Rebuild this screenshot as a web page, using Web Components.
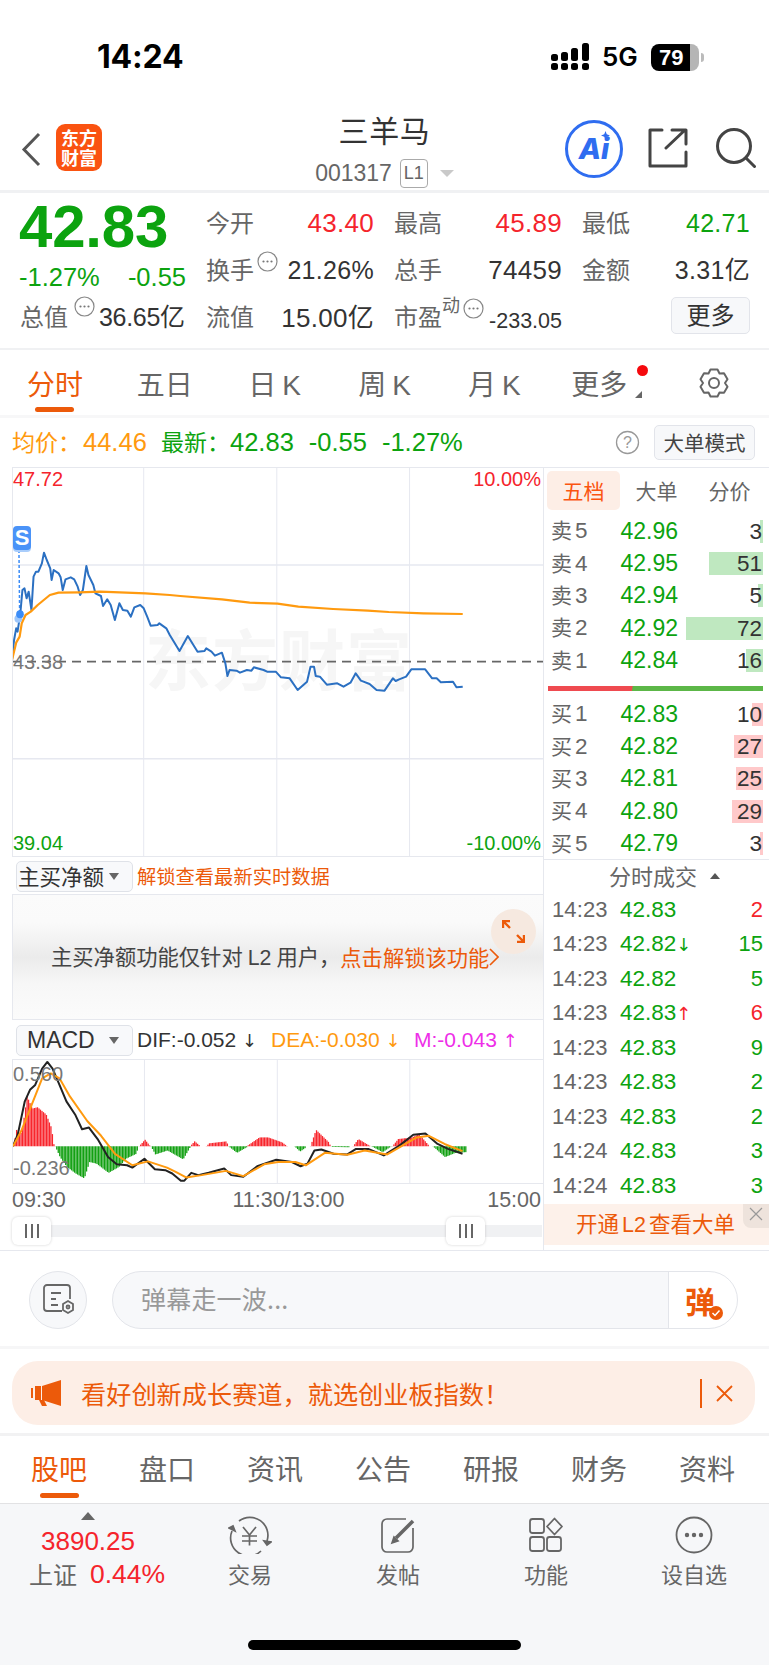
<!DOCTYPE html>
<html lang="zh-CN"><head><meta charset="utf-8"><title>三羊马</title>
<style>
html,body{margin:0;padding:0;background:#fff}
body{width:769px;height:1665px;overflow:hidden;font-family:"Liberation Sans","Noto Sans CJK SC",sans-serif;color:#333}
app-shell{display:block}
</style></head><body>
<app-shell>
<status-bar></status-bar>
<stock-header></stock-header>
<quote-panel>
<quote-cell label="今开" tone="up">43.40</quote-cell>
<quote-cell label="最高" tone="up">45.89</quote-cell>
<quote-cell label="最低" tone="down" fs="25">42.71</quote-cell>
<quote-cell label="换手" dots fs="25">21.26%</quote-cell>
<quote-cell label="总手">74459</quote-cell>
<quote-cell label="金额" fs="25" lift>3.31亿</quote-cell>
<quote-cell label="流值" lift>15.00亿</quote-cell>
<quote-cell label="市盈" sup="动" dots small>-233.05</quote-cell>
<more-button>更多</more-button>
</quote-panel>
<period-tabs>
<tab-item active>分时</tab-item><tab-item>五日</tab-item><tab-item>日<i>K</i></tab-item><tab-item>周<i>K</i></tab-item><tab-item>月<i>K</i></tab-item><tab-item more>更多</tab-item>
</period-tabs>
<info-row></info-row>
<market-area>
<div slot="left">
<intraday-chart></intraday-chart>
<main-net></main-net>
<macd-chart></macd-chart>
<range-slider></range-slider>
</div>
<div slot="right">
<order-book></order-book>
<trade-list></trade-list>
</div>
</market-area>
<danmu-bar></danmu-bar>
<promo-banner></promo-banner>
<sub-tabs>
<tab-item active>股吧</tab-item><tab-item>盘口</tab-item><tab-item>资讯</tab-item><tab-item>公告</tab-item><tab-item>研报</tab-item><tab-item>财务</tab-item><tab-item>资料</tab-item>
</sub-tabs>
<foot-bar></foot-bar>
</app-shell>
<script>
const RED='#f5242c',GREEN='#0ca30f',ORANGE='#ec5a0a',AVG='#ff9a0f';
class Base extends HTMLElement{
  connectedCallback(){ if(this.shadowRoot) return;
    this.attachShadow({mode:'open'}).innerHTML=`<style>${this.css()}</style>${this.html()}`; }
  css(){return ':host{display:block}'} html(){return '<slot></slot>'}
}
const def=(n,c)=>customElements.define(n,c);

def('app-shell',class extends Base{});

def('status-bar',class extends Base{
  css(){return `:host{display:flex;height:110px;box-sizing:border-box;padding:36px 0 0 97px;align-items:flex-start;color:#000}
  .t{font:700 32px/42px "Inter","Liberation Sans",sans-serif;letter-spacing:-.2px;width:454px}
  svg{display:block;margin-top:7px}
  .g{font:600 26px/42px "Inter","Liberation Sans",sans-serif;margin-left:13px;width:49px}
  .b{display:flex;align-items:center;margin-top:8px}
  .bat{width:48px;height:27px;border-radius:8px;background:linear-gradient(90deg,#000 0 39px,#b5b5b5 39px);color:#fff;font:700 22px/27px "Liberation Sans",sans-serif;padding-left:8px;box-sizing:border-box}
  .nub{width:3px;height:9px;background:#bbb;border-radius:0 3px 3px 0;margin-left:2px}`}
  html(){return `<div class="t">14:24</div>
  <svg width="38" height="28" viewBox="0 0 38 28" fill="#000"><rect x="0" y="11" width="7" height="7" rx="2.500"/><rect x="0" y="20" width="7" height="7" rx="2.500"/><rect x="10" y="9" width="7" height="9" rx="2.500"/><rect x="10" y="20" width="7" height="7" rx="2.500"/><rect x="20" y="5" width="7" height="13" rx="2.500"/><rect x="20" y="20" width="7" height="7" rx="2.500"/><rect x="31" y="0" width="7" height="18" rx="2.500"/><rect x="31" y="20" width="7" height="7" rx="2.500"/></svg>
  <div class="g">5G</div><div class="b"><div class="bat">79</div><div class="nub"></div></div>`}
});

def('stock-header',class extends Base{
  css(){return `:host{display:grid;grid-template-columns:1fr auto 1fr;height:83px;box-sizing:border-box;border-bottom:3px solid #f0f1f3}
  .l{display:flex;align-items:flex-start;padding:14px 0 0 21px}
  .chev{margin-top:8px}
  .logo{width:46px;height:47px;border-radius:9px;background:#fa5311;color:#fff;font:700 18px/20px "Noto Sans CJK SC",sans-serif;text-align:center;margin-left:15px;padding:3px 5px 0;box-sizing:border-box;word-break:break-all}
  .c{display:flex;flex-direction:column;align-items:center;margin-top:-1px}
  .n{font:400 30px/40px "Noto Sans CJK SC",sans-serif;color:#333;letter-spacing:.6px}
  .cd{display:flex;align-items:center;margin-top:9px;font-size:23px;color:#666;line-height:30px}
  .lv{border:1.2px solid #aaa;border-radius:4px;width:26px;height:27px;font-size:18px;line-height:27px;text-align:center;margin-left:8px;color:#666;box-sizing:content-box}
  .tri{width:0;height:0;border:7px solid transparent;border-top:7px solid #c9c9c9;border-bottom:0;margin-left:12px}
  .r{display:flex;justify-content:flex-end;align-items:flex-start;padding:10px 13px 0 0}
  .ai{width:52px;height:52px;border:3px solid #2f6df0;border-radius:50%;color:#2f6df0;font:italic 800 29px/52px "Inter","Liberation Sans",sans-serif;text-align:center;margin-right:25px;position:relative}
  .ai svg{position:absolute;right:10px;top:8px}
  .sh{margin:8px 28px 0 0}.se{margin-top:8px}`}
  html(){return `<div class="l"><svg class="chev" width="20" height="35" viewBox="0 0 20 35"><polyline points="18,2 3,17.5 18,33" fill="none" stroke="#555" stroke-width="3"/></svg><div class="logo">东方财富</div></div>
  <div class="c"><div class="n">三羊马</div><div class="cd">001317<span class="lv">L1</span><span class="tri"></span></div></div>
  <div class="r"><div class="ai">Ai<svg width="9" height="9" viewBox="0 0 10 10"><path d="M5 0l1.400 3.600L10 5 6.400 6.400 5 10 3.600 6.400 0 5l3.600-1.400z" fill="#2f6df0"/></svg></div>
  <svg class="sh" width="40" height="40" viewBox="0 0 40 40" fill="none" stroke="#444" stroke-width="3" stroke-linecap="round" stroke-linejoin="round"><path d="M14 2H2v36h36V24"/><path d="M18 20L37 2M24 2h14v14"/></svg>
  <svg class="se" width="40" height="40" viewBox="0 0 40 40" fill="none" stroke="#444" stroke-width="3" stroke-linecap="round"><circle cx="18" cy="18" r="16.500"/><path d="M30 30l8.500 8.500"/></svg></div>`}
});

const DOTS=`<svg width="21" height="21" viewBox="0 0 21 21" style="flex:none"><circle cx="10.500" cy="10.500" r="9.500" fill="none" stroke="#888" stroke-width="1.200"/><circle cx="6.500" cy="10.500" r="1.100" fill="#777"/><circle cx="10.500" cy="10.500" r="1.100" fill="#777"/><circle cx="14.500" cy="10.500" r="1.100" fill="#777"/></svg>`;

def('quote-panel',class extends Base{
  css(){return `:host{display:grid;grid-template-columns:166px 1fr;column-gap:20px;height:157px;box-sizing:border-box;padding:0 19px 0 20px;border-bottom:2px solid #f0f1f3}
  .p{font:700 60px/62px "Liberation Sans",sans-serif;color:${GREEN};margin:3px 0 0 -1px;letter-spacing:-.2px;white-space:nowrap}
  .ch{display:flex;justify-content:space-between;width:167px;margin-left:-1px;font-size:25.500px;line-height:32px;color:${GREEN};margin-top:3px;white-space:nowrap}
  .tv{display:flex;align-items:flex-start;width:168px;margin-top:6px;white-space:nowrap;color:#333;height:40px}
  .tv b{font-weight:400;color:#666;font-size:24px;line-height:36px;margin-top:-1px;font-family:"Noto Sans CJK SC",sans-serif}
  .tv svg{margin:-3px 4px 0 6px}
  .tv span{font-size:25px;line-height:36px;letter-spacing:-.3px}
  .g{display:grid;grid-template-columns:168px 168px 168px;column-gap:20px;grid-auto-rows:47px;padding-top:7px;align-items:center;align-self:start}`}
  html(){return `<div><div class="p">42.83</div><div class="ch"><span>-1.27%</span><span>-0.55</span></div>
  <div class="tv"><b>总值</b>${DOTS}<span>36.65亿</span></div></div><div class="g"><slot></slot></div>`}
});
def('quote-cell',class extends Base{
  css(){const t=this.getAttribute('tone'),sm=this.hasAttribute('small'),fs=this.getAttribute('fs')||26;return `:host{display:flex;justify-content:space-between;align-items:center;height:47px;white-space:nowrap}
  .l{display:flex;align-items:center;color:#666;font:400 24px/34px "Noto Sans CJK SC",sans-serif;margin-top:-4px}
  .l svg{margin:-14px 0 0 3px}
  sup{font-size:18px;line-height:18px;align-self:flex-start;margin-top:-4px}
  .v{font-size:${sm?'21.500px':fs+'px'};letter-spacing:${sm?'0':'.3px'};color:${t=='up'?RED:t=='down'?GREEN:'#333'};${sm?'margin-top:7px;':''}${this.hasAttribute('lift')?'margin-top:-5px;':''}}`}
  html(){return `<div class="l">${this.getAttribute('label')}${this.hasAttribute('sup')?`<sup>${this.getAttribute('sup')}</sup>`:''}${this.hasAttribute('dots')?DOTS:''}</div><div class="v"><slot></slot></div>`}
});
def('more-button',class extends Base{
  css(){return `:host{display:block;justify-self:end;width:79px;height:37px;box-sizing:border-box;border:1.500px solid #e2e4ea;border-radius:5px;background:#f7f8fa;font:400 24px/32px "Noto Sans CJK SC",sans-serif;color:#333;text-align:center;margin-top:-5px}`}
});

def('tab-item',class extends Base{
  css(){const a=this.hasAttribute('active'),m=this.hasAttribute('more');return `:host{display:flex;flex-direction:column;align-items:center;padding-top:15px;${m?'margin-right:10px;':''}color:${a?ORANGE:'#666'};font:400 28px/37px "Noto Sans CJK SC",sans-serif}
  .t{display:block;position:relative;white-space:nowrap}
  .bar{width:39px;height:5px;border-radius:3px;background:${a?ORANGE:'transparent'};margin-top:var(--bar-gap,5px)}
  ::slotted(i){font:400 28px/37px "Liberation Sans",sans-serif;margin-left:6px}
  .dot{position:absolute;right:-21px;top:0;width:11px;height:11px;border-radius:50%;background:#f5090d}
  .mt{position:absolute;right:-15px;bottom:4px;width:0;height:0;border-left:7px solid transparent;border-bottom:7px solid #666}`}
  html(){const m=this.hasAttribute('more');return `<div class="t"><slot></slot>${m?'<span class="dot"></span><span class="mt"></span>':''}</div><div class="bar"></div>`}
});
def('period-tabs',class extends Base{
  css(){return `:host{display:grid;grid-template-columns:repeat(7,1fr);height:68px;box-sizing:border-box;border-bottom:3px solid #f7f7f8}
  .g{display:flex;justify-content:center;padding-top:17px}`}
  html(){return `<slot></slot><div class="g"><svg width="32" height="32" viewBox="0 0 32 32" fill="none" stroke="#666" stroke-width="2"><path d="M12.500 2.500h7l2 4 4.500-.3 3.500 6-2.500 3.800 2.500 3.800-3.500 6-4.500-.3-2 4h-7l-2-4-4.500.3-3.500-6 2.500-3.800-2.500-3.800 3.500-6 4.500.3z" stroke-linejoin="round"/><circle cx="16" cy="16" r="5"/></svg></div>`}
});

def('info-row',class extends Base{
  css(){return `:host{display:flex;align-items:center;height:49px;box-sizing:border-box;padding:0 14px 0 12px;font-size:25.500px;white-space:nowrap}
  b{font:400 23px/30px "Noto Sans CJK SC",sans-serif;margin-bottom:4px}
  .a{color:${AVG};display:flex;align-items:center;width:149px}
  .a b{margin-right:2px}
  .n{color:${GREEN};display:flex;align-items:center}
  .n span{margin-right:15px}
  .h{margin-left:auto;margin-right:14px;display:block}
  .btn{width:101px;height:35px;border:1.500px solid #e2e4ea;border-radius:5px;background:#f7f8fa;box-sizing:border-box;font:400 20.500px/32px "Noto Sans CJK SC",sans-serif;color:#444;text-align:center;margin-top:0}`}
  html(){return `<div class="a"><b>均价：</b>44.46</div><div class="n"><b>最新：</b><span>42.83</span><span>-0.55</span><span>-1.27%</span></div>
  <svg class="h" width="25" height="25" viewBox="0 0 25 25"><circle cx="12.500" cy="12.500" r="11" fill="none" stroke="#999" stroke-width="1.300"/><text x="12.500" y="18" text-anchor="middle" font-size="16" fill="#999" font-family="Liberation Sans">?</text></svg>
  <div class="btn">大单模式</div>`}
});

def('market-area',class extends Base{
  css(){return `:host{display:grid;grid-template-columns:531px 226px;padding-left:12px;height:784px;box-sizing:border-box;border-bottom:1.500px solid #e6e8ee}`}
  html(){return `<slot name="left"></slot><slot name="right"></slot>`}
});

const BLUE_PTS="36,600 42,540 48,505 52,515 60,460 66,390 72,385 78,415 84,395 92,450 98,350 105,335 112,335 122,310 128,278 136,300 146,325 150,360 156,330 170,340 176,352 182,390 190,358 205,352 215,358 225,380 232,405 240,390 250,318 256,345 270,375 276,400 292,408 298,438 310,418 320,435 332,480 345,430 355,450 368,452 378,470 388,442 405,435 415,445 425,470 435,497 455,495 460,490 480,505 490,525 518,573 542,528 570,575 590,573 595,565 610,575 620,587 640,578 650,610 656,648 662,630 682,632 692,638 712,630 725,632 732,622 760,630 770,635 795,635 810,652 835,655 858,690 885,665 895,620 905,620 910,648 922,650 942,674 972,670 990,680 1010,668 1025,640 1040,662 1065,672 1085,690 1108,692 1132,655 1140,663 1150,658 1170,650 1185,628 1225,628 1245,655 1258,655 1270,667 1305,665 1315,682 1333,680";
const ORG_PTS="36,600 48,548 58,530 64,490 75,465 90,455 110,435 145,405 170,398 230,397 290,395 420,400 490,405 520,408 640,418 720,428 800,431 860,440 960,447 1060,452 1120,456 1220,460 1333,462";
const VL=(y1,y2)=>[415,798,1180].map(x=>`<line x1="${x}" x2="${x}" y1="${y1}" y2="${y2}" stroke="#e6e8f0" stroke-width="1" vector-effect="non-scaling-stroke"/>`).join('');
const HL=(y)=>`<line x1="36" x2="1564" y1="${y}" y2="${y}" stroke="#e6e8f0" stroke-width="1.500" vector-effect="non-scaling-stroke"/>`;

def('intraday-chart',class extends Base{
  css(){return `:host{display:block;position:relative;width:531px;height:390px;box-sizing:border-box;font-size:20px;border:1px solid #e6e8ee;border-right:0;overflow:hidden}
  svg{display:block;position:absolute;left:-1px;top:-1px;width:531px;height:390px}
  span{position:absolute;line-height:24px;white-space:nowrap}
  .wm{left:132px;top:153px;font:700 66px/70px "Noto Sans CJK SC",sans-serif;color:#f6f6f6;letter-spacing:1px}
  .u{color:${RED}}.d{color:${GREEN}}
  .s{left:0;top:58px;width:18px;height:24px;background:#4a93f8;border-radius:4px;color:#fff;font:700 22px/24px "Liberation Sans",sans-serif;text-align:center;box-shadow:0 2px 0 #a9cdfb}`}
  html(){return `<span class="wm">东方财富</span>
  <svg viewBox="36 21 1528 1170" preserveAspectRatio="none">${VL(21,1191)}${HL(315)}${HL(896)}
  <line x1="36" x2="1564" y1="605" y2="605" stroke="#666" stroke-width="1.800" stroke-dasharray="9 6" vector-effect="non-scaling-stroke"/>
  <line x1="56" x2="58" y1="270" y2="465" stroke="#3b8cf7" stroke-width="1.500" stroke-dasharray="3 2" vector-effect="non-scaling-stroke"/>
  <polyline points="${BLUE_PTS}" fill="none" stroke="#2b70c2" stroke-width="2" stroke-linejoin="round" vector-effect="non-scaling-stroke"/>
  <polyline points="${ORG_PTS}" fill="none" stroke="#ff9a0f" stroke-width="2.200" stroke-linejoin="round" vector-effect="non-scaling-stroke"/>
  <ellipse cx="54" cy="476" rx="11" ry="12" fill="#9cc6fb"/><ellipse cx="59" cy="463" rx="11" ry="12" fill="#3b8cf7"/>
  </svg>
  <span class="u" style="left:0;top:-1px">47.72</span><span class="u" style="right:2px;top:-1px">10.00%</span>
  <span class="d" style="left:0;bottom:1px">39.04</span><span class="d" style="right:2px;bottom:1px">-10.00%</span>
  <span style="left:0;top:182px;color:#777">43.38</span>
  <span class="s">S</span>`}
});

const DROP=`.dd{display:flex;align-items:center;justify-content:space-between;width:117px;height:31px;box-sizing:border-box;border:1.500px solid #dfe2e8;border-radius:5px;background:#f8f9fb;padding:0 13px 0 1px;color:#333;white-space:nowrap}
  .dd i{width:0;height:0;border:5px solid transparent;border-top:7px solid #666;border-bottom:0;display:block}`;
def('main-net',class extends Base{
  css(){return `:host{display:block;width:531px}
  ${DROP}
  .top{display:flex;align-items:center;height:38px;padding:1px 0 0 4px;box-sizing:border-box;gap:4px;border-bottom:1.500px solid #e6e8ee}
  .dd{font:400 21.500px/28px "Noto Sans CJK SC",sans-serif}
  .lk{color:${ORANGE};font:400 19.300px/30px "Noto Sans CJK SC",sans-serif;white-space:nowrap}
  .p{position:relative;height:125px;border-bottom:1.500px solid #e6e8ee;box-sizing:border-box;border-left:1px solid #e6e8ee;background:linear-gradient(180deg,#fbfbfb 0,#fafafa 22%,#ebebeb 50%,#f7f7f7 72%,#fbfbfb 100%);display:flex;align-items:center;padding:0 0 0 38px;font:400 21.300px/30px "Noto Sans CJK SC",sans-serif;color:#444;white-space:nowrap}
  .p em{font-style:normal;color:${ORANGE}}
  .p u{text-decoration:none;font-family:"Liberation Sans",sans-serif;margin:0 5px}
  .c{position:absolute;right:7px;top:14px;width:45px;height:45px;border-radius:50%;background:#f6e9e0}
  .c svg{display:block;margin:11px}`}
  html(){return `<div class="top"><div class="dd">主买净额<i></i></div><div class="lk">解锁查看最新实时数据</div></div>
  <div class="p"><span>主买净额功能仅针对<u>L2</u>用户，</span><em>点击解锁该功能</em><svg width="10" height="18" viewBox="0 0 10 18" fill="none" stroke="${ORANGE}" stroke-width="1.600"><path d="M1 1l8 8-8 8"/></svg>
  <div class="c"><svg width="23" height="23" viewBox="0 0 23 23" fill="none" stroke="${ORANGE}" stroke-width="2.400"><path d="M1 8V1h7M1 1l7 7M22 15v7h-7M22 22l-7-7"/></svg></div></div>`}
});

const ENV=[
 ['r',[[36,377],[45,325],[55,345],[62,320],[75,225],[90,262],[105,258],[130,280],[145,320],[153,377]]],
 ['g',[[156,377],[170,410],[190,440],[215,460],[240,475],[255,425],[275,430],[310,458],[340,440],[360,415],[390,400],[396,377]]],
 ['r',[[398,377],[415,357],[430,377]]],
 ['g',[[432,377],[445,402],[480,390],[525,417],[545,380]]],
 ['r',[[545,377],[558,362],[575,377]]],
 ['r',[[592,377],[600,368],[650,362],[655,377]]],
 ['g',[[656,377],[680,397],[708,380]]],
 ['r',[[708,377],[745,350],[770,350],[810,365],[825,377]]],
 ['g',[[846,377],[862,393],[880,380]]],
 ['r',[[892,377],[908,327],[945,365],[950,377]]],
 ['g',[[955,379],[1005,380]]],
 ['r',[[1015,377],[1030,355],[1065,377]]],
 ['g',[[1068,377],[1100,395],[1125,377]]],
 ['r',[[1128,377],[1145,355],[1185,350],[1205,340],[1235,377]]],
 ['g',[[1245,377],[1280,410],[1310,397],[1340,395],[1341,377]]]
];
function bars(){let s='';for(const [c,p] of ENV){for(let x=p[0][0];x<=p[p.length-1][0];x+=4.3){let i=0;while(i<p.length-2&&x>p[i+1][0])i++;const a=p[i],b=p[i+1],y=a[1]+(b[1]-a[1])*(x-a[0])/(b[0]-a[0]);const t=Math.min(y,377),h=Math.abs(y-377);s+=`<rect x="${x.toFixed(1)}" y="${t.toFixed(1)}" width="3.700" height="${Math.max(h,.5).toFixed(1)}" fill="${c=='r'?'#f8252c':'#12a012'}"/>`}}return s}
const DIF="36,377 50,340 70,240 85,205 100,190 120,140 135,120 150,140 170,190 190,240 215,280 235,325 255,320 280,355 310,410 335,432 365,435 380,442 415,415 445,447 475,450 495,460 520,482 530,482 550,458 570,465 600,458 645,445 665,465 700,470 740,438 795,418 840,425 865,438 885,430 905,390 925,387 960,400 1000,402 1025,385 1060,385 1105,405 1150,375 1190,342 1225,338 1260,370 1290,385 1332,400";
const DEA="36,377 60,330 90,250 120,170 145,155 170,170 200,225 250,300 290,345 330,400 380,435 425,423 480,442 505,455 535,472 580,465 650,452 700,468 760,432 800,425 850,425 880,435 935,397 1000,403 1050,390 1115,402 1200,350 1235,345 1280,370 1332,392";
def('macd-chart',class extends Base{
  css(){return `:host{display:block;width:531px}
  ${DROP}
  .top{display:flex;align-items:center;height:39px;padding:1px 0 0 4px;box-sizing:border-box;white-space:nowrap;font-size:21px}
  .top s{text-decoration:none;font:400 18px/24px "DejaVu Sans",sans-serif}
  .dd{font-size:23px;line-height:28px;padding-left:10px;margin-right:4px}
  .dif{color:#333;width:134px}.dea{color:${AVG};width:143px}.m{color:#ee2ee8}
  .ch{position:relative;height:125px;border-top:1.500px solid #e6e8ee;border-bottom:1.500px solid #e6e8ee;box-sizing:border-box;border-left:1px solid #e6e8ee}
  svg{display:block;width:100%;height:100%}
  .ch span{position:absolute;left:0;color:#777;font-size:20px;line-height:24px}
  .tm{display:flex;justify-content:space-between;height:31px;font-size:21.500px;line-height:32px;color:#666;padding-right:2px}
  .tm .mid{margin-left:24px}`}
  html(){return `<div class="top"><div class="dd">MACD<i></i></div><span class="dif">DIF:-0.052 <s>↓</s></span><span class="dea">DEA:-0.030 <s>↓</s></span><span class="m">M:-0.043 <s>↑</s></span></div>
  <div class="ch"><svg viewBox="36 114 1528 375" preserveAspectRatio="none">${VL(114,489)}
  ${bars()}
  <polyline points="${DIF}" fill="none" stroke="#222" stroke-width="2" stroke-linejoin="round" vector-effect="non-scaling-stroke"/>
  <polyline points="${DEA}" fill="none" stroke="#ff9a0f" stroke-width="2" stroke-linejoin="round" vector-effect="non-scaling-stroke"/></svg>
  <span style="top:2px">0.560</span><span style="top:96px">-0.236</span></div>
  <div class="tm"><span>09:30</span><span class="mid">11:30/13:00</span><span>15:00</span></div>`}
});
def('range-slider',class extends Base{
  css(){return `:host{display:flex;height:34px;padding-top:2px;box-sizing:content-box;width:530px;background:linear-gradient(#f0f1f3,#f0f1f3) 0 10px/100% 12px no-repeat;border-radius:6px}
  .h{width:39px;height:28px;background:#fff;border-radius:6px;box-shadow:0 0 3px rgba(0,0,0,.18);display:flex;justify-content:center;align-items:center;gap:4px}
  .h i{width:2px;height:14px;background:#666;display:block}
  .h+.h{margin-left:395px}`}
  html(){const h=`<div class="h"><i></i><i></i><i></i></div>`;return h+h}
});

def('book-row',class extends Base{
  css(){const c=this.getAttribute('side')=='s'?'#bfe8c0':'#ffc9ca';const w=this.getAttribute('w');return `:host{display:grid;grid-template-columns:38px 89px 1fr;align-items:center;height:32.400px;padding:0 6px 0 7px;white-space:nowrap}
  .l{color:#666;font:400 21px/24px "Noto Sans CJK SC",sans-serif;display:flex;align-items:center;gap:3px}
  .l span{margin-top:-4px}
  .l b{font:400 22.500px/24px "Liberation Sans",sans-serif}
  .p{color:${GREEN};text-align:right;font-size:23px}
  .q{color:#333;text-align:right;font-size:22.500px;line-height:23px;padding-right:1px;background:linear-gradient(${c},${c}) right/${w}px 100% no-repeat}`}
  html(){const [a,b]=this.getAttribute('label').split(' ');return `<div class="l"><span>${a}</span><b>${b}</b></div><div class="p">${this.getAttribute('price')}</div><div class="q">${this.getAttribute('qty')}</div>`}
});
def('order-book',class extends Base{
  css(){return `:host{display:block;border-bottom:1.500px solid #e6e8ee;height:393px;box-sizing:border-box;border-left:1px solid #e6e8ee;border-top:1px solid #e6e8ee}
  .t{display:grid;grid-template-columns:73px 73px 73px;padding:3px 0 0 3px;margin-bottom:5px;font:400 21px/39px "Noto Sans CJK SC",sans-serif;color:#666;text-align:center}
  .t .a{background:#fdeee6;color:#fb5510;border-radius:5px}
  .sp{height:5px;margin:9px 6px 7px 4px;background:linear-gradient(99deg,#ef4a50 0 39%,#5cb748 39.500%)}`}
  html(){const r=(l,p,q,w,s)=>`<book-row label="${l}" price="${p}" qty="${q}" w="${w}" side="${s}"></book-row>`;
  return `<div class="t"><div class="a">五档</div><div>大单</div><div>分价</div></div>
  ${r('卖 5','42.96','3',3,'s')}${r('卖 4','42.95','51',54,'s')}${r('卖 3','42.94','5',5,'s')}${r('卖 2','42.92','72',77,'s')}${r('卖 1','42.84','16',17,'s')}
  <div class="sp"></div>
  ${r('买 1','42.83','10',11,'b')}${r('买 2','42.82','27',29,'b')}${r('买 3','42.81','25',27,'b')}${r('买 4','42.80','29',31,'b')}${r('买 5','42.79','3',3,'b')}`}
});
def('trade-list',class extends Base{
  css(){return `:host{display:block;position:relative;height:390px;box-sizing:border-box;border-left:1px solid #e6e8ee;font-size:22px}
  .h{display:flex;justify-content:center;align-items:center;gap:13px;height:31px;margin-bottom:1.500px;color:#666;font:400 22px/31px "Noto Sans CJK SC",sans-serif;padding-left:16px}
  .h i{width:0;height:0;border:5px solid transparent;border-bottom:6px solid #555;border-top:0}
  .r{display:grid;grid-template-columns:68px 96px 1fr;align-items:center;height:34.500px;padding:0 6px 0 8px;white-space:nowrap}
  .tm{color:#666;letter-spacing:.1px}.pr{color:${GREEN};font-size:22.500px}.v{text-align:right}
  .pr s{text-decoration:none;font:400 18px/24px "DejaVu Sans",sans-serif}
  .b{margin-top:1px;height:41px;background:#fdf1ea;color:${ORANGE};font:400 21.500px/37px "Noto Sans CJK SC",sans-serif;text-align:center;position:relative;padding-right:2px}
  .b u{text-decoration:none;font-family:"Liberation Sans",sans-serif;margin:0 3px}
  .x{position:absolute;right:0;top:0;width:26px;height:24px;background:#eee3dc;border-radius:0 0 0 8px}
  .x svg{display:block;margin:3px 6px}`}
  html(){const U=(c,a)=>`<s style="color:${c}">${a}</s>`;
  const rows=[['14:23','42.83','','2',RED],['14:23','42.82',U(GREEN,'↓'),'15',GREEN],['14:23','42.82','','5',GREEN],['14:23','42.83',U(RED,'↑'),'6',RED],['14:23','42.83','','9',GREEN],['14:23','42.83','','2',GREEN],['14:23','42.83','','2',GREEN],['14:24','42.83','','3',GREEN],['14:24','42.83','','3',GREEN]];
  return `<div class="h">分时成交<i></i></div>${rows.map(r=>`<div class="r"><span class="tm">${r[0]}</span><span class="pr">${r[1]}${r[2]}</span><span class="v" style="color:${r[4]}">${r[3]}</span></div>`).join('')}
  <div class="b">开通<u>L2</u>查看大单<div class="x"><svg width="14" height="14" viewBox="0 0 14 14" stroke="#999" stroke-width="1.200"><path d="M1 1l12 12M13 1L1 13"/></svg></div></div>`}
});

def('danmu-bar',class extends Base{
  css(){return `:host{display:flex;height:98px;box-sizing:border-box;padding:20px 0 0 29px;border-bottom:3px solid #f6f6f7}
  .rb{width:58px;height:58px;border-radius:50%;box-sizing:border-box;border:1.500px solid #e3e5ea;background:#f7f8fa;display:flex;align-items:center;justify-content:center}
  .in{margin-left:25px;width:626px;height:58px;box-sizing:border-box;border:1.500px solid #e3e5ea;border-radius:29px;background:linear-gradient(90deg,#f7f8fa 0 555px,#e3e5ea 555px 556.500px,#fff 556.500px);display:flex;align-items:center;overflow:hidden;font:400 25px/34px "Noto Sans CJK SC",sans-serif;color:#999}
  .tx{padding-left:28px;width:555px;box-sizing:border-box;padding-bottom:4px;letter-spacing:.2px}
  .d{position:relative;font:700 30px/36px "Noto Sans CJK SC",sans-serif;color:${ORANGE};margin-left:17px}
  .d svg{position:absolute;right:-8px;bottom:-2px}`}
  html(){return `<div class="rb"><svg width="34" height="34" viewBox="0 0 34 34" fill="none" stroke="#666" stroke-width="1.800"><path d="M21 28H6a3 3 0 0 1-3-3V5a3 3 0 0 1 3-3h20a3 3 0 0 1 3 3v11"/><path d="M10 10h10M10 16h5M10 22h7"/><path d="M27 18l5 3v6l-5 3-5-3v-6z"/><circle cx="27" cy="24" r="1.500"/></svg></div>
  <div class="in"><div class="tx">弹幕走一波...</div><div class="d">弹<svg width="14" height="14" viewBox="0 0 14 14"><circle cx="7" cy="7" r="7" fill="${ORANGE}"/><path d="M3.500 7l2.500 2.500 4.500-5" stroke="#fff" stroke-width="1.500" fill="none"/></svg></div></div>`}
});
def('promo-banner',class extends Base{
  css(){return `:host{display:block;height:87px;box-sizing:border-box;padding:12px 14px 0 12px;border-bottom:3px solid #f2f2f3}
  .b{height:64px;border-radius:26px;background:#fdeee6;display:flex;align-items:center;color:${ORANGE};font:400 25.200px/34px "Noto Sans CJK SC",sans-serif;white-space:nowrap;padding-left:19px}
  .t{margin-left:20px;width:619px}
  .ln{width:1.500px;height:29px;background:${ORANGE}}
  .x{margin-left:14px}`}
  html(){return `<div class="b"><svg width="30" height="27" viewBox="0 0 30 27" fill="${ORANGE}"><path d="M0 8h2v10H0zM4 6h6v14H4zM11 6L30 0v26L11 20z"/><path d="M8 20h5l3 6h-5z"/></svg><div class="t">看好创新成长赛道，就选创业板指数！</div><div class="ln"></div><svg class="x" width="17" height="17" viewBox="0 0 17 17" stroke="${ORANGE}" stroke-width="1.800"><path d="M1 1l15 15M16 1L1 16"/></svg></div>`}
});
def('sub-tabs',class extends Base{
  css(){return `:host{display:grid;grid-template-columns:repeat(7,108px);height:69px;box-sizing:border-box;padding-left:5px;margin-top:-1px;--bar-gap:6px;border-bottom:1.500px solid #e2e2e4}`}
});

def('foot-bar',class extends Base{
  css(){return `:host{display:block;height:162px;background:#f6f7f9;box-sizing:border-box}
  .g{display:grid;grid-template-columns:176px repeat(4,148px);height:136px}
  .q{display:flex;flex-direction:column;align-items:center}
  .tri{width:0;height:0;border:7px solid transparent;border-bottom:8px solid #666;border-top:0;margin-top:8px}
  .idx{color:${RED};font-size:26px;line-height:30px;margin-top:6px}
  .ln{margin:1px 0 0 18px;display:flex;gap:13px;align-items:center;font-size:26.500px;line-height:34px;color:${RED};white-space:nowrap}
  .ln b{font:400 24px/34px "Noto Sans CJK SC",sans-serif;color:#666}
  .it{display:flex;flex-direction:column;align-items:center;color:#666;font:400 22px/34px "Noto Sans CJK SC",sans-serif}
  .it svg{display:block;margin-top:12px;height:38px}
  .it span{margin-top:2px}
  .hm{width:273px;height:10px;border-radius:5px;background:#000;margin:0 auto}`}
  html(){return `<div class="g"><div class="q"><i class="tri"></i><div class="idx">3890.25</div><div class="ln"><b>上证</b>0.44%</div></div>
  <div class="it"><svg width="44" height="38" viewBox="0 0 44 38" fill="none" stroke="#666" stroke-width="1.700"><path d="M11 5A18 18 0 0 1 39 25M33 35A18 18 0 0 1 4 15"/><path d="M1 12l4-2 2 5zM43 26l-4 3-3-4z" fill="#666"/><path d="M15 11l6.500 8 6.500-8M14 20h15M14 25h15M21.500 19v10.500"/></svg><span>交易</span></div>
  <div class="it"><svg width="36" height="38" viewBox="0 0 36 38" fill="none" stroke="#666" stroke-width="1.700"><path d="M26 3H7a5 5 0 0 0-5 5v23a5 5 0 0 0 5 5h21a5 5 0 0 0 5-5V12"/><path d="M16 22L33 5" stroke-width="3.500"/><path d="M12 27l2-6 4 4z" fill="#666"/></svg><span>发帖</span></div>
  <div class="it"><svg width="36" height="38" viewBox="0 0 36 38" fill="none" stroke="#666" stroke-width="1.800"><rect x="2" y="3" width="14" height="14" rx="2.500"/><path d="M26.500 2.500l7.500 8-7.500 8-7.500-8z" stroke-linejoin="round"/><rect x="2" y="21" width="14" height="14" rx="2.500"/><rect x="19" y="21" width="14" height="14" rx="2.500"/></svg><span>功能</span></div>
  <div class="it"><svg width="38" height="38" viewBox="0 0 38 38" fill="none" stroke="#666" stroke-width="1.800"><circle cx="19" cy="19" r="17.500"/><circle cx="12" cy="19" r="1.300" fill="#666"/><circle cx="19" cy="19" r="1.300" fill="#666"/><circle cx="26" cy="19" r="1.300" fill="#666"/></svg><span>设自选</span></div></div>
  <div class="hm"></div>`}
});
</script>
</body></html>
